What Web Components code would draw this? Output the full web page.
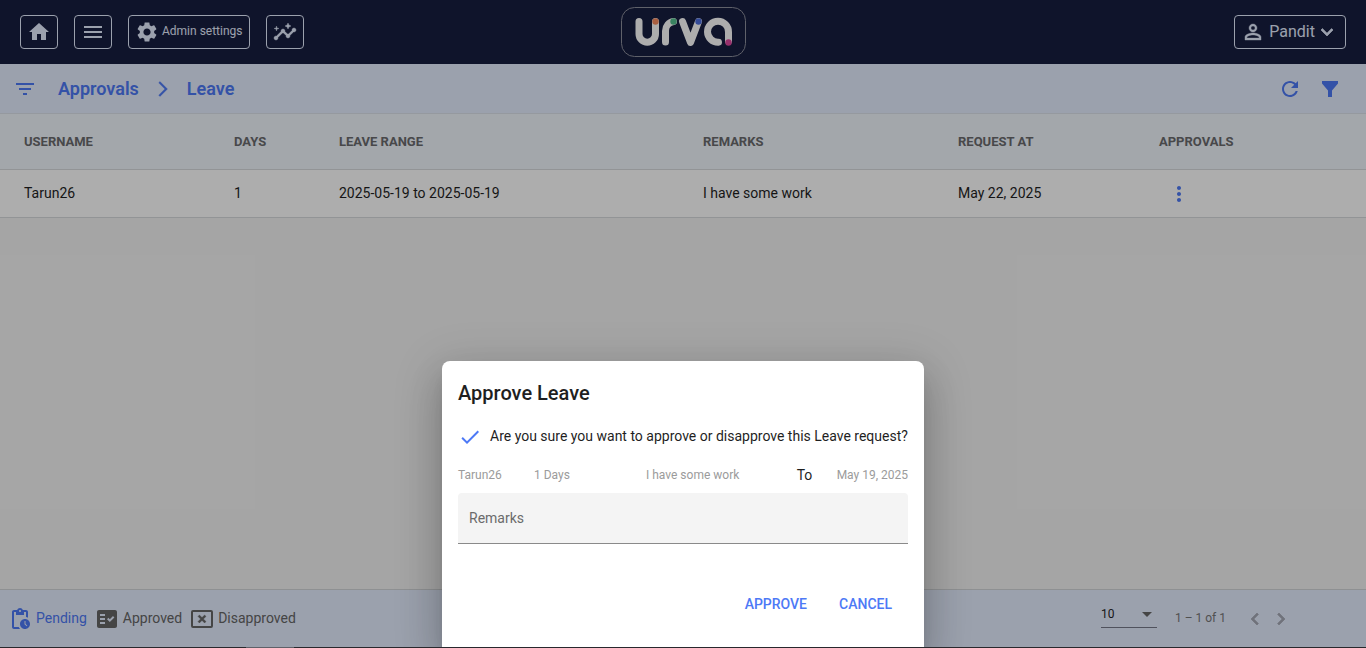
<!DOCTYPE html>
<html lang="en">
<head>
<meta charset="utf-8">
<title>Urva - Leave approvals</title>
<style>
html, body { margin: 0; height: 100%; }
body { font-family: Roboto, "Liberation Sans", sans-serif; font-size: 14px; color: #1f1f1f; }
</style>
</head>
<body>
<urva-app></urva-app>
<script>
const define = (name, markup, setup) => {
  const template = document.createElement('template');
  template.innerHTML = markup;
  customElements.define(name, class extends HTMLElement {
    constructor() {
      super();
      this.attachShadow({ mode: 'open' }).append(template.content.cloneNode(true));
    }
    connectedCallback() { if (setup) setup(this, this.shadowRoot); }
  });
};

/* 24-unit icon paths */
const ICONS = {
  home: '<path d="M10 20v-6h4v6h5v-8h3L12 3 2 12h3v8z"/>',
  menu: '<path d="M3 18h18v-2H3v2zm0-5h18v-2H3v2zm0-7v2h18V6H3z"/>',
  settings: '<path d="M19.14 12.94c.04-.3.06-.61.06-.94 0-.32-.02-.64-.07-.94l2.03-1.58c.18-.14.23-.41.12-.61l-1.92-3.32c-.12-.22-.37-.29-.59-.22l-2.39.96c-.5-.38-1.03-.7-1.62-.94l-.36-2.54c-.04-.24-.24-.41-.48-.41h-3.84c-.24 0-.43.17-.47.41l-.36 2.54c-.59.24-1.13.57-1.62.94l-2.39-.96c-.22-.08-.47 0-.59.22L2.74 8.87c-.12.21-.08.47.12.61l2.03 1.58c-.05.3-.09.63-.09.94s.02.64.07.94l-2.03 1.58c-.18.14-.23.41-.12.61l1.92 3.32c.12.22.37.29.59.22l2.39-.96c.5.38 1.03.7 1.62.94l.36 2.54c.05.24.24.41.48.41h3.84c.24 0 .44-.17.47-.41l.36-2.54c.59-.24 1.13-.56 1.62-.94l2.39.96c.22.08.47 0 .59-.22l1.92-3.32c.12-.22.07-.47-.12-.61l-2.01-1.58zM12 15.6c-1.98 0-3.6-1.62-3.6-3.6s1.62-3.6 3.6-3.6 3.6 1.62 3.6 3.6-1.62 3.6-3.6 3.6z"/>',
  insights: '<g stroke="currentColor" stroke-width=".4"><path d="M21 8c-1.45 0-2.26 1.44-1.93 2.51l-3.55 3.56c-.3-.09-.74-.09-1.04 0l-2.55-2.55C12.27 10.45 11.46 9 10 9c-1.45 0-2.27 1.44-1.93 2.52l-4.56 4.55C2.44 15.74 1 16.55 1 18c0 1.1.9 2 2 2 1.45 0 2.26-1.44 1.93-2.51l4.55-4.56c.3.09.74.09 1.04 0l2.55 2.55C12.73 16.55 13.54 18 15 18c1.45 0 2.27-1.44 1.93-2.52l3.56-3.55C21.56 12.26 23 11.45 23 10c0-1.1-.9-2-2-2z"/><path d="M15 9l.94-2.07L18 6l-2.06-.93L15 3l-.92 2.07L12 6l2.08.93zM3.500 11L4 9l2-.5L4 8l-.5-2L3 8l-2 .5L3 9z"/></g>',
  person: '<path stroke="currentColor" stroke-width=".4" d="M12 5.900a2.100 2.100 0 1 1 0 4.200 2.100 2.100 0 1 1 0-4.200m0 9c2.970 0 6.100 1.460 6.100 2.100v1.100H5.900V17c0-.64 3.130-2.100 6.100-2.100M12 4C9.790 4 8 5.790 8 8s1.790 4 4 4 4-1.790 4-4-1.790-4-4-4zm0 9c-2.670 0-8 1.340-8 4v3h16v-3c0-2.660-5.330-4-8-4z"/>',
  down: '<path stroke="currentColor" stroke-width=".7" d="M7.410 8.590L12 13.170l4.590-4.580L18 10l-6 6-6-6z"/>',
  filterlist: '<path d="M10 18h4v-2h-4v2zM3 6v2h18V6H3zm3 7h12v-2H6v2z"/>',
  chevron: '<path stroke="currentColor" stroke-width=".4" d="M6.230 20.230L8 22l10-10L8 2 6.230 3.770 14.460 12z"/>',
  refresh: '<path d="M17.650 6.350C16.200 4.900 14.210 4 12 4c-4.420 0-7.990 3.580-7.990 8s3.570 8 7.990 8c3.730 0 6.840-2.550 7.730-6h-2.080c-.82 2.330-3.040 4-5.650 4-3.310 0-6-2.690-6-6s2.690-6 6-6c1.660 0 3.140.69 4.220 1.780L13 11h7V4z"/>',
  funnel: '<path d="M4 4h16v2.500L14 13.500V20h-4v-6.500L4 6.500z"/>',
  more: '<path d="M12 8c1.100 0 2-.9 2-2s-.9-2-2-2-2 .9-2 2 .9 2 2 2zm0 2c-1.100 0-2 .9-2 2s.9 2 2 2 2-.9 2-2-.9-2-2-2zm0 6c-1.100 0-2 .9-2 2s.9 2 2 2 2-.9 2-2-.9-2-2-2z"/>',
  pending: '<path d="M17 12c-2.760 0-5 2.240-5 5s2.240 5 5 5 5-2.240 5-5-2.240-5-5-5zm1.650 7.350L16.500 17.200V14h1v2.790l1.850 1.850-.7.710zM18 3h-3.180C14.400 1.840 13.300 1 12 1s-2.400.84-2.820 2H6c-1.100 0-2 .9-2 2v15c0 1.100.9 2 2 2h6.110c-.59-.57-1.070-1.250-1.420-2H6V5h2v3h8V5h2v5.080c.71.1 1.380.31 2 .6V5c0-1.100-.9-2-2-2zm-6 2c-.55 0-1-.45-1-1s.45-1 1-1 1 .45 1 1-.45 1-1 1z"/>',
  factcheck: '<path fill-rule="evenodd" d="M20 3H4c-1.100 0-2 .9-2 2v14c0 1.100.9 2 2 2h16c1.100 0 2-.9 2-2V5c0-1.100-.9-2-2-2zM10 17H5v-2h5v2zm0-4H5v-2h5v2zm0-4H5V7h5v2zm4.820 6L12 12.160l1.410-1.410 1.410 1.420L17.990 9l1.420 1.420L14.820 15z"/>',
  cancelbox: '<path fill-rule="evenodd" d="M1 5a2 2 0 0 1 2-2h18a2 2 0 0 1 2 2v14a2 2 0 0 1-2 2H3a2 2 0 0 1-2-2zM3 5v14h18V5z"/><path stroke="currentColor" stroke-width=".4" d="M9.400 16L12 13.400l2.600 2.600 1.400-1.400-2.600-2.600L16 9.400 14.600 8 12 10.600 9.400 8 8 9.400l2.600 2.600L8 14.600z"/>',
  left: '<path stroke="currentColor" stroke-width=".7" d="M15.410 7.410L14 6l-6 6 6 6 1.410-1.410L10.830 12z"/>',
  right: '<path stroke="currentColor" stroke-width=".7" d="M10 6L8.590 7.410 13.170 12l-4.580 4.590L10 18l6-6z"/>',
  arrow: '<path d="M6 9.500l6 6 6-6z"/>',
  check: '<path d="M9 16.170L4.830 12l-1.420 1.410L9 19 21 7l-1.410-1.410z"/>'
};

define('urva-icon', `<style>
  :host { display: block; flex: none; width: 24px; height: 24px; }
  svg { display: block; width: 100%; height: 100%; fill: currentColor; }
</style><svg viewBox="0 0 24 24" aria-hidden="true"></svg>`, (host, root) => {
  root.querySelector('svg').innerHTML = ICONS[host.getAttribute('name')] || '';
});

define('urva-button', `<style>
  :host { display: block; color: #e5edff; }
  button { display: flex; align-items: center; box-sizing: border-box; height: 34px; min-width: 38px;
    padding: 0 6px; border: 1px solid currentColor; border-radius: 4px; background: none; color: inherit; font: inherit; }
</style><button type="button"><slot></slot></button>`, (host, root) => {
  if (host.hasAttribute('label')) root.querySelector('button').setAttribute('aria-label', host.getAttribute('label'));
});

define('urva-logo', `<style>
  :host { display: block; width: 125px; height: 50px; }
  svg { display: block; }
</style><svg width="125" height="50" viewBox="0 0 125 50" role="img" aria-label="urva">
  <rect x="0.500" y="0.500" width="124" height="49" rx="13" fill="none" stroke="#8d8f9c"/>
  <g fill="none" stroke="#fff" stroke-width="7" stroke-linecap="round" stroke-linejoin="round">
    <path d="M18 14.500V27a8.250 8.250 0 0 0 16.500 0V14.500"/>
    <path d="M44.500 35V24a9.500 9.500 0 0 1 8-9.500"/>
    <path d="M61.500 14.500L69.500 35.500 77.500 14.500"/>
    <path d="M97.500 35.200a10.500 10.500 0 1 1 10-10.200V34"/>
  </g>
  <circle cx="34.500" cy="14.500" r="3.200" fill="#f98c61"/>
  <circle cx="52.500" cy="14.500" r="3.200" fill="#55c28f"/>
  <circle cx="77.500" cy="14.500" r="3.200" fill="#4d6fe0"/>
  <circle cx="107.500" cy="35.500" r="3.200" fill="#e0479f"/>
</svg>`);

define('urva-header', `<style>
  :host { display: grid; grid-template-columns: 1fr auto 1fr; align-items: center; height: 64px; padding: 0 20px; background: #171e40; }
  nav { display: flex; gap: 16px; }
  .user { justify-self: end; }
  .label { padding-bottom: 2px; }
  .admin { display: flex; align-items: center; gap: 3px; font-size: 12px; }
  .account { display: flex; align-items: center; font-size: 16px; }
  .account .label { padding-left: 4px; }
</style>
<nav>
  <urva-button label="Home"><urva-icon name="home"></urva-icon></urva-button>
  <urva-button label="Menu"><urva-icon name="menu"></urva-icon></urva-button>
  <urva-button><span class="admin"><urva-icon name="settings"></urva-icon><span class="label">Admin settings</span></span></urva-button>
  <urva-button label="Insights"><urva-icon name="insights"></urva-icon></urva-button>
</nav>
<urva-logo></urva-logo>
<urva-button class="user"><span class="account"><urva-icon name="person"></urva-icon><span class="label">Pandit</span><urva-icon name="down"></urva-icon></span></urva-button>`);

define('urva-breadcrumb', `<style>
  :host { display: flex; align-items: center; justify-content: space-between; box-sizing: border-box; height: 50px; padding: 0 24px 0 13px;
    background: #e5edff; color: #4d79f6; border-bottom: 1px solid #dce2ea; }
  .path, .tools { display: flex; align-items: center; }
  .tools { gap: 16px; }
  .lead { margin-right: 21px; }
  .sep { width: 18px; height: 18px; margin: 0 15px; }
  a { color: inherit; text-decoration: none; font-size: 18px; font-weight: 600; }
  button { display: block; padding: 0; border: 0; background: none; color: inherit; }
</style>
<div class="path"><button class="lead" type="button" aria-label="Sections"><urva-icon name="filterlist"></urva-icon></button>
<a href="#approvals">Approvals</a><urva-icon class="sep" name="chevron"></urva-icon><a href="#leave">Leave</a></div>
<div class="tools"><button type="button" aria-label="Refresh"><urva-icon name="refresh"></urva-icon></button>
<button type="button" aria-label="Filter"><urva-icon name="funnel"></urva-icon></button></div>`);

define('urva-table', `<style>
  :host { display: block; }
  table { width: 100%; table-layout: fixed; border-collapse: separate; border-spacing: 0; background: #fff; }
  th, td { box-sizing: border-box; padding: 0; text-align: left; border-bottom: 1px solid #d8dade; }
  th:first-child, td:first-child { padding-left: 24px; }
  th { height: 56px; background: #f0f6fd; color: #6a6b6d; font-size: 13px; font-weight: 700; }
  td { height: 48px; padding-bottom: 2px; font-size: 14px; }
  td:last-child { padding-bottom: 0; }
  button { display: block; margin-left: 8px; padding: 0; border: 0; background: none; color: #4d79f6; }
</style>
<table>
  <colgroup><col style="width:234px"><col style="width:105px"><col style="width:364px"><col style="width:255px"><col style="width:201px"><col></colgroup>
  <thead><tr><th>USERNAME</th><th>DAYS</th><th>LEAVE RANGE</th><th>REMARKS</th><th>REQUEST AT</th><th>APPROVALS</th></tr></thead>
  <tbody><tr><td>Tarun26</td><td>1</td><td>2025-05-19 to 2025-05-19</td><td>I have some work</td><td>May 22, 2025</td>
  <td><button type="button" aria-label="Actions"><urva-icon name="more"></urva-icon></button></td></tr></tbody>
</table>`);

define('urva-status', `<style>
  :host { display: block; color: #666; }
  :host([active]) { color: #4d79f6; }
  button { display: flex; align-items: center; gap: 4px; padding: 0; border: 0; background: none; color: inherit; font: inherit; font-size: 14px; }
  span { padding-bottom: 2px; }
</style><button type="button"><urva-icon></urva-icon><span><slot></slot></span></button>`, (host, root) => {
  const icon = document.createElement('urva-icon');
  icon.setAttribute('name', host.getAttribute('icon'));
  root.querySelector('urva-icon').replaceWith(icon);
});

define('urva-footer', `<style>
  :host { display: flex; align-items: center; justify-content: space-between; box-sizing: border-box; height: 58px; padding: 0 73px 0 8px;
    background: #e5edff; border-top: 1px solid #d2d4d8; }
  .tabs { display: flex; gap: 8px; }
  .pager { display: flex; align-items: center; font-size: 12px; color: #777; }
  .size { display: grid; align-items: center; width: 56px; margin: 0 18px 8px 0; border-bottom: 1px solid #77798a; }
  .size > * { grid-area: 1 / 1; }
  .size urva-icon { justify-self: end; width: 20px; height: 20px; pointer-events: none; color: #666; }
  select { appearance: none; width: 100%; height: 26px; padding: 0; border: 0; background: none; font: inherit; color: #1f1f1f; }
  .range { margin-right: 17px; padding-bottom: 2px; }
  button { display: block; padding: 0; border: 0; background: none; color: #a5a9b5; }
  button + button { margin-left: 2px; }
</style>
<div class="tabs"><urva-status icon="pending" active>Pending</urva-status><urva-status icon="factcheck">Approved</urva-status><urva-status icon="cancelbox">Disapproved</urva-status></div>
<div class="pager"><div class="size"><select aria-label="Items per page"><option>10</option><option>25</option></select><urva-icon name="arrow"></urva-icon></div>
<span class="range">1 – 1 of 1</span>
<button type="button" aria-label="Previous page"><urva-icon name="left"></urva-icon></button>
<button type="button" aria-label="Next page"><urva-icon name="right"></urva-icon></button></div>`);

define('urva-dialog', `<style>
  :host { display: block; box-sizing: border-box; width: 482px; max-width: 100%; padding: 16px; border-radius: 8px 8px 0 0; background: #fff;
    box-shadow: 0 11px 15px -7px rgba(0,0,0,.2), 0 24px 38px 3px rgba(0,0,0,.14), 0 9px 46px 8px rgba(0,0,0,.12); }
  h2 { margin: 0; font-size: 20px; line-height: 32px; font-weight: 500; }
  .ask { display: flex; align-items: center; gap: 8px; height: 24px; margin: 16px 0 0; }
  .ask span { padding-bottom: 2px; }
  .ask urva-icon { color: #4d79f6; }
  .facts { display: grid; grid-template-columns: 76px 112px 1fr 40px auto; margin-top: 16px; font-size: 12px; line-height: 20px; color: #9b9b9b; }
  .facts b { font-size: 14px; font-weight: 400; color: #1f1f1f; }
  input { display: block; box-sizing: border-box; width: 100%; height: 51px; margin-top: 8px; padding: 0 11px; border: 0; border-bottom: 1px solid #8a8a8a;
    border-radius: 4px 4px 0 0; background: #f4f4f4; font: inherit; outline: 0; }
  input::placeholder { color: #6b6b6b; opacity: 1; }
  .actions { display: flex; justify-content: flex-end; margin: 42px 0 9px; }
  .actions button { height: 36px; padding: 0 16px; border: 0; background: none; color: #4d79f6; font: inherit; font-weight: 500; }
</style>
<section role="dialog" aria-labelledby="title">
  <h2 id="title">Approve Leave</h2>
  <p class="ask"><urva-icon name="check"></urva-icon><span>Are you sure you want to approve or disapprove this Leave request?</span></p>
  <div class="facts"><span>Tarun26</span><span>1 Days</span><span>I have some work</span><b>To</b><span>May 19, 2025</span></div>
  <input type="text" aria-label="Remarks" placeholder="Remarks">
  <div class="actions"><button type="button">APPROVE</button><button type="button">CANCEL</button></div>
</section>`);

define('urva-app', `<style>
  :host { display: flex; flex-direction: column; min-height: 100vh; background: #f4f4f4; }
  .screen { position: relative; display: flex; flex: 1; flex-direction: column; overflow: hidden; }
  main { flex: 1; }
  .scrim { position: absolute; inset: 0; display: flex; align-items: flex-end; justify-content: center; background: rgba(0,0,0,.32); }
  .edge { height: 1px; background: #29282d; }
  .edge i { display: block; width: 48px; height: 1px; margin-left: 246px; background: #5f6068; }
</style>
<div class="screen">
  <urva-header></urva-header>
  <urva-breadcrumb></urva-breadcrumb>
  <main><urva-table></urva-table></main>
  <urva-footer></urva-footer>
  <div class="scrim"><urva-dialog></urva-dialog></div>
</div>
<div class="edge"><i></i></div>`);
</script>
</body>
</html>
